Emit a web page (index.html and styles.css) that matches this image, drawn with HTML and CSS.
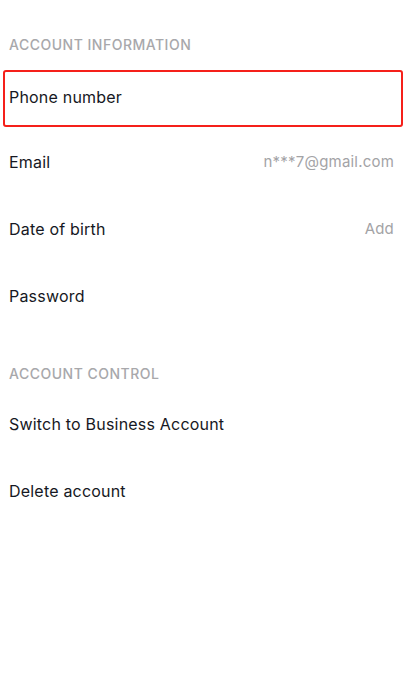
FILE: index.html
```html
<!DOCTYPE html>
<html lang="en">
<head>
<meta charset="utf-8">
<title>Manage account</title>
<link rel="stylesheet" href="styles.css">
</head>
<body>
<main class="settings">
  <section class="group">
    <h2 class="group-title">ACCOUNT INFORMATION</h2>
    <div class="row row-highlight"><span class="label">Phone number</span></div>
    <div class="row"><span class="label">Email</span><span class="value">n***7@gmail.com</span></div>
    <div class="row"><span class="label">Date of birth</span><span class="value">Add</span></div>
    <div class="row"><span class="label">Password</span></div>
  </section>
  <section class="group">
    <h2 class="group-title">ACCOUNT CONTROL</h2>
    <div class="row"><span class="label">Switch to Business Account</span></div>
    <div class="row"><span class="label">Delete account</span></div>
  </section>
</main>
</body>
</html>
```
FILE: styles.css
```css
html, body {
  margin: 0;
  padding: 0;
  background: #fff;
}
body {
  font-family: "Inter", "Liberation Sans", sans-serif;
  color: #161823;
}
.settings {
  display: flex;
  flex-direction: column;
}
.group-title {
  margin: 0;
  padding: 37px 9px 8px;
  font-size: 14px;
  line-height: 16px;
  font-weight: 500;
  letter-spacing: 0.5px;
  color: #a8a8ab;
}
.row {
  height: 67px;
  display: flex;
  align-items: center;
  justify-content: space-between;
  padding: 0 13px 0 9px;
  font-size: 16px;
  letter-spacing: 0.2px;
  position: relative;
}
.row-highlight {
  padding-top: 5px;
  box-sizing: border-box;
}
.row-highlight::after {
  content: "";
  position: absolute;
  left: 3px;
  right: 4px;
  top: 9px;
  bottom: 1px;
  border: 2.5px solid #f5201a;
  border-radius: 3px;
}
.value {
  color: #a3a3a6;
  font-size: 15px;
  letter-spacing: 0.2px;
}
```
